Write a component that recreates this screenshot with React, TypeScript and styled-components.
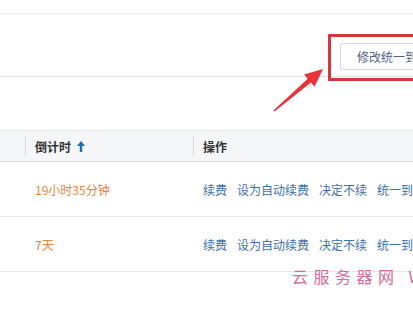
import React from 'react';
import styled, { createGlobalStyle } from 'styled-components';

const GlobalStyle = createGlobalStyle`
  html, body {
    margin: 0;
    padding: 0;
    background: #ffffff;
  }
  body {
    width: 413px;
    height: 310px;
    overflow: hidden;
    font-family: "Noto Sans CJK SC", "Liberation Sans", sans-serif;
    font-size: 12px;
    color: #333333;
  }
`;

const Page = styled.div`
  position: relative;
  width: 540px;
  height: 310px;
`;

const TopStrip = styled.div`
  height: 13px;
  border-bottom: 1px solid #e4e5e7;
`;

const Toolbar = styled.div`
  display: flex;
  justify-content: flex-end;
  align-items: flex-start;
  height: 63px;
  padding: 29px 0 0 0;
  box-sizing: border-box;
  border-bottom: 1px solid #e2e3e5;
`;

const ToolbarInner = styled.div`
  width: 200px;
`;

const Button = styled.button`
  height: 27px;
  padding: 0 16px;
  border: 1px solid #d3d8e0;
  border-radius: 2px;
  background: #ffffff;
  color: #52618a;
  font-family: inherit;
  font-size: 12px;
  white-space: nowrap;
  cursor: pointer;
`;

const Table = styled.div`
  margin-top: 53px;
  width: 100%;
`;

const Row = styled.div<{ $head?: boolean }>`
  display: grid;
  grid-template-columns: 25px 168px 1fr;
  align-items: center;
  height: ${p => (p.$head ? '30px' : '54px')};
  background: ${p => (p.$head ? '#f5f6f8' : '#ffffff')};
  border-top: ${p => (p.$head ? '1px solid #e3e5e8' : 'none')};
  border-bottom: 1px solid ${p => (p.$head ? '#d9dbde' : '#e6e7e9')};
`;

const HeadCell = styled.div<{ $sep?: boolean }>`
  position: relative;
  padding-left: 10px;
  height: 100%;
  display: flex;
  align-items: center;
  font-weight: 700;
  color: #333333;
  &::before {
    content: '';
    display: ${p => (p.$sep ? 'block' : 'none')};
    position: absolute;
    left: 0;
    top: 5px;
    bottom: 5px;
    border-left: 1px solid #d8d9dc;
  }
`;

const SortArrow = styled.svg`
  margin-left: 6px;
  margin-top: 1px;
`;

const Cell = styled.div`
  padding-left: 10px;
  white-space: nowrap;
`;

const Countdown = styled.span`
  color: #e5833f;
`;

const Actions = styled.div`
  display: flex;
  gap: 10px;
  padding-left: 10px;
  white-space: nowrap;
`;

const ActionLink = styled.a`
  color: #3d6fae;
  text-decoration: none;
  cursor: pointer;
`;

const Highlight = styled.div`
  position: absolute;
  left: 328px;
  top: 34px;
  width: 120px;
  height: 47px;
  box-sizing: border-box;
  border: 3px solid #d9363b;
  pointer-events: none;
`;

const Pointer = styled.svg`
  position: absolute;
  left: 268px;
  top: 64px;
`;

const Watermark = styled.div`
  position: absolute;
  left: 292px;
  top: 264px;
  color: #d76b9c;
  font-size: 16px;
  font-weight: 400;
  letter-spacing: 5.5px;
  white-space: nowrap;
  pointer-events: none;
`;

const rows = ['19小时35分钟', '7天'];
const actions = ['续费', '设为自动续费', '决定不续', '统一到期日'];

export default function App() {
  return (
    <>
      <GlobalStyle />
      <Page>
        <TopStrip />
        <Toolbar>
          <ToolbarInner>
            <Button>修改统一到期日</Button>
          </ToolbarInner>
        </Toolbar>
        <Table>
          <Row $head>
            <HeadCell />
            <HeadCell $sep>
              倒计时
              <SortArrow width="8" height="11" viewBox="0 0 8 11">
                <polygon points="4,0 8,5 5.2,5 5.2,11 2.8,11 2.8,5 0,5" fill="#1f6fae" />
              </SortArrow>
            </HeadCell>
            <HeadCell $sep>操作</HeadCell>
          </Row>
          {rows.map(r => (
            <Row key={r}>
              <Cell />
              <Cell>
                <Countdown>{r}</Countdown>
              </Cell>
              <Actions>
                {actions.map(a => (
                  <ActionLink key={a}>{a}</ActionLink>
                ))}
              </Actions>
            </Row>
          ))}
        </Table>
        <Highlight />
        <Pointer width="60" height="52" viewBox="268 64 60 52">
          <polygon
            points="273.4,110.6 307.7,78.8 304.1,74.6 323,69 314.5,86.8 310.9,82.6 274.6,111.6"
            fill="#e8333a"
          />
        </Pointer>
        <Watermark>云服务器网 WWW</Watermark>
      </Page>
    </>
  );
}
